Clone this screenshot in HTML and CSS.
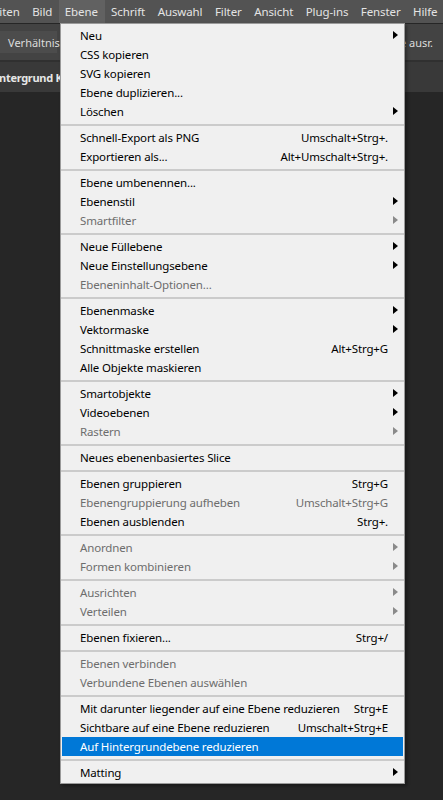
FILE: index.html
```html
<!DOCTYPE html>
<html lang="de">
<head>
<meta charset="utf-8">
<title>Ebene Menü</title>
<link rel="stylesheet" href="styles.css">
</head>
<body>
<div class="app">
  <div class="menubar">
    <span class="mb-item mb-first">Bearbeiten</span>
    <span class="mb-item">Bild</span>
    <span class="mb-item active">Ebene</span>
    <span class="mb-item">Schrift</span>
    <span class="mb-item">Auswahl</span>
    <span class="mb-item">Filter</span>
    <span class="mb-item">Ansicht</span>
    <span class="mb-item">Plug-ins</span>
    <span class="mb-item">Fenster</span>
    <span class="mb-item">Hilfe</span>
  </div>
  <div class="optionsbar">
    <span class="opt-btn">Verhältnis</span>
    <span class="opt-right">Gerade ausr.</span>
  </div>
  <div class="tabrow">
    <span class="tab-title">Hintergrund Kopie</span>
  </div>
  <div class="workspace"></div>

  <div class="menu">
    <div class="mi"><span class="lbl">Neu</span><span class="sub"></span></div>
    <div class="mi"><span class="lbl">CSS kopieren</span></div>
    <div class="mi"><span class="lbl">SVG kopieren</span></div>
    <div class="mi"><span class="lbl">Ebene duplizieren...</span></div>
    <div class="mi"><span class="lbl">Löschen</span><span class="sub"></span></div>
    <div class="sep"></div>
    <div class="mi"><span class="lbl">Schnell-Export als PNG</span><span class="sc">Umschalt+Strg+.</span></div>
    <div class="mi"><span class="lbl">Exportieren als...</span><span class="sc">Alt+Umschalt+Strg+.</span></div>
    <div class="sep"></div>
    <div class="mi"><span class="lbl">Ebene umbenennen...</span></div>
    <div class="mi"><span class="lbl">Ebenenstil</span><span class="sub"></span></div>
    <div class="mi dis"><span class="lbl">Smartfilter</span><span class="sub"></span></div>
    <div class="sep"></div>
    <div class="mi"><span class="lbl">Neue Füllebene</span><span class="sub"></span></div>
    <div class="mi"><span class="lbl">Neue Einstellungsebene</span><span class="sub"></span></div>
    <div class="mi dis"><span class="lbl">Ebeneninhalt-Optionen...</span></div>
    <div class="sep"></div>
    <div class="mi"><span class="lbl">Ebenenmaske</span><span class="sub"></span></div>
    <div class="mi"><span class="lbl">Vektormaske</span><span class="sub"></span></div>
    <div class="mi"><span class="lbl">Schnittmaske erstellen</span><span class="sc">Alt+Strg+G</span></div>
    <div class="mi"><span class="lbl">Alle Objekte maskieren</span></div>
    <div class="sep"></div>
    <div class="mi"><span class="lbl">Smartobjekte</span><span class="sub"></span></div>
    <div class="mi"><span class="lbl">Videoebenen</span><span class="sub"></span></div>
    <div class="mi dis"><span class="lbl">Rastern</span><span class="sub"></span></div>
    <div class="sep"></div>
    <div class="mi"><span class="lbl">Neues ebenenbasiertes Slice</span></div>
    <div class="sep"></div>
    <div class="mi"><span class="lbl">Ebenen gruppieren</span><span class="sc">Strg+G</span></div>
    <div class="mi dis"><span class="lbl">Ebenengruppierung aufheben</span><span class="sc">Umschalt+Strg+G</span></div>
    <div class="mi"><span class="lbl">Ebenen ausblenden</span><span class="sc">Strg+.</span></div>
    <div class="sep"></div>
    <div class="mi dis"><span class="lbl">Anordnen</span><span class="sub"></span></div>
    <div class="mi dis"><span class="lbl">Formen kombinieren</span><span class="sub"></span></div>
    <div class="sep"></div>
    <div class="mi dis"><span class="lbl">Ausrichten</span><span class="sub"></span></div>
    <div class="mi dis"><span class="lbl">Verteilen</span><span class="sub"></span></div>
    <div class="sep"></div>
    <div class="mi"><span class="lbl">Ebenen fixieren...</span><span class="sc">Strg+/</span></div>
    <div class="sep"></div>
    <div class="mi dis"><span class="lbl">Ebenen verbinden</span></div>
    <div class="mi dis"><span class="lbl">Verbundene Ebenen auswählen</span></div>
    <div class="sep"></div>
    <div class="mi"><span class="lbl">Mit darunter liegender auf eine Ebene reduzieren</span><span class="sc">Strg+E</span></div>
    <div class="mi"><span class="lbl">Sichtbare auf eine Ebene reduzieren</span><span class="sc">Umschalt+Strg+E</span></div>
    <div class="mi hl"><span class="lbl">Auf Hintergrundebene reduzieren</span></div>
    <div class="sep"></div>
    <div class="mi"><span class="lbl">Matting</span><span class="sub"></span></div>
  </div>
</div>
</body>
</html>
```
FILE: styles.css
```css
html, body {
  margin: 0;
  padding: 0;
  background: #262626;
}
body {
  font-family: "Noto Sans", "Open Sans", sans-serif;
  width: 443px;
  height: 800px;
  overflow: hidden;
}
.app {
  position: relative;
  width: 443px;
  height: 800px;
  display: flex;
  flex-direction: column;
}
.menubar {
  height: 23px;
  background: #535353;
  display: flex;
  align-items: stretch;
  white-space: nowrap;
  overflow: hidden;
  color: #e4e4e4;
  font-size: 11.5px;
  letter-spacing: -0.1px;
}
.mb-item {
  display: flex;
  align-items: center;
  padding: 0 6.25px;
}
.mb-first {
  margin-left: -45px;
}
.mb-item.active {
  background: #616161;
  padding-right: 7px;
}
.optionsbar {
  height: 36px;
  margin-top: 1px;
  background: #434343;
  border-bottom: 2px solid #303030;
  display: flex;
  align-items: center;
  justify-content: space-between;
  color: #dcdcdc;
  font-size: 11px;
  white-space: nowrap;
  overflow: hidden;
}
.opt-btn {
  background: #4c4c4c;
  height: 22px;
  width: 57px;
  display: flex;
  align-items: center;
  padding-left: 8px;
  box-sizing: border-box;
}
.opt-right {
  padding-right: 10px;
}
.tabrow {
  height: 30px;
  background: #393939;
  display: flex;
  align-items: center;
  overflow: hidden;
  white-space: nowrap;
}
.tab-title {
  color: #e6e6e6;
  font-weight: bold;
  font-size: 11px;
  letter-spacing: -0.3px;
  margin-left: -12px;
}
.workspace {
  flex: 1;
  background: #262626;
}
.menu {
  position: absolute;
  left: 60px;
  top: 23px;
  width: 345px;
  box-sizing: border-box;
  background: #f0f0f0;
  border: 1px solid #9a9a9a;
  padding: 1.5px 0 1px;
  box-shadow: 2px 2px 3px rgba(0, 0, 0, 0.35);
  font-size: 11.5px;
  letter-spacing: -0.15px;
  color: #000;
}
.mi {
  display: flex;
  align-items: center;
  height: 19px;
  margin: 0 1px;
  padding: 0 5px 0 18px;
  white-space: nowrap;
}
.lbl {
  flex: 1 1 auto;
  min-width: 0;
}
.sc {
  margin-left: 8px;
  margin-right: 10px;
}
.sub {
  width: 0;
  height: 0;
  border-left: 5px solid #000;
  border-top: 4.5px solid transparent;
  border-bottom: 4.5px solid transparent;
}
.mi.dis {
  color: #6d6d6d;
}
.mi.dis .sub {
  border-left-color: #8a8a8a;
}
.mi.hl {
  background: #0078d7;
  color: #fff;
}
.sep {
  height: 2px;
  background: #cbcbcb;
  margin: 3px 0 2px;
}
```
